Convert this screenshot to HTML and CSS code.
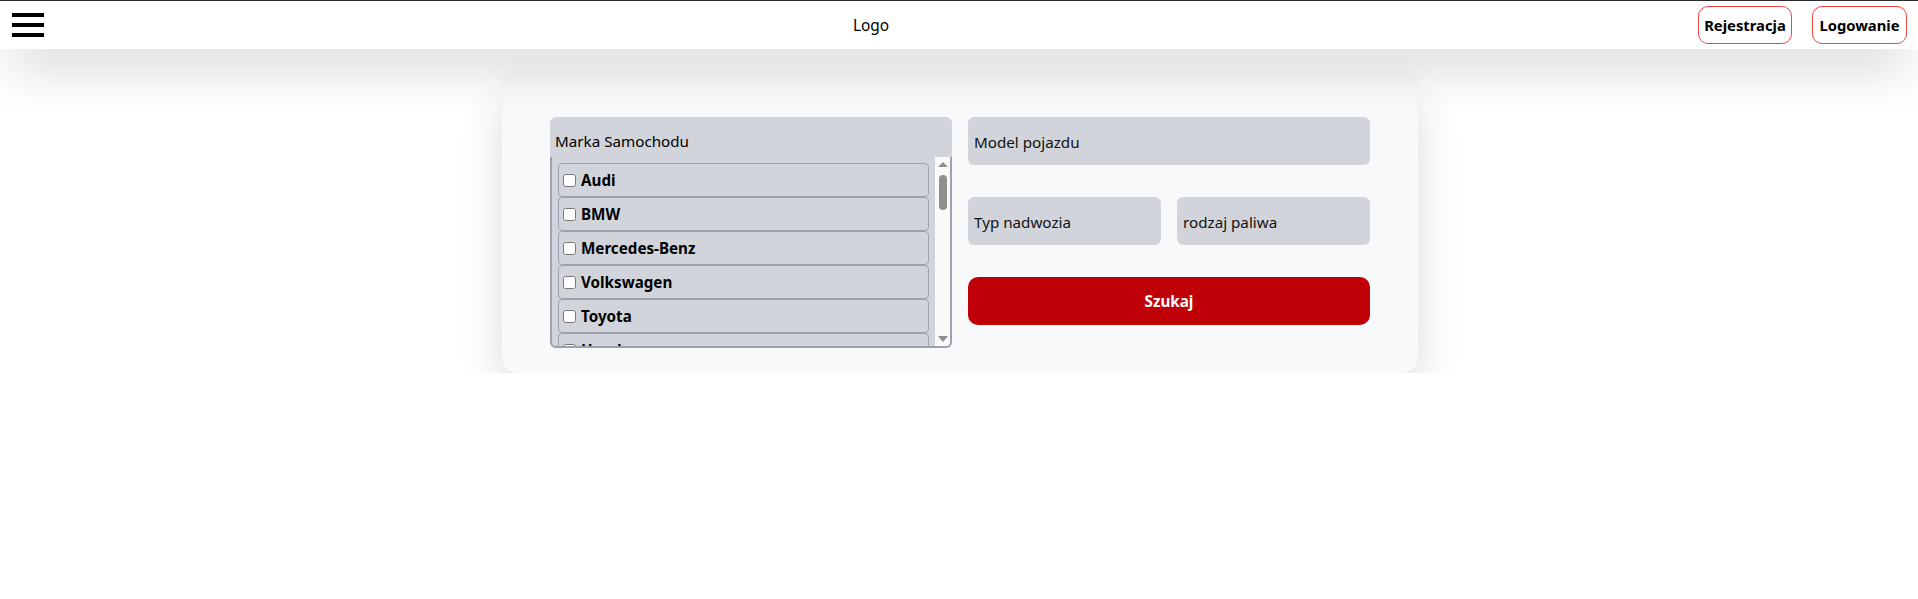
FILE: index.html
```html
<!DOCTYPE html>
<html lang="pl">
<head>
<meta charset="utf-8">
<title>Szukaj samochodu</title>
<link rel="stylesheet" href="styles.css">
</head>
<body>
<header class="topbar">
  <button class="burger" type="button" aria-label="Menu">
    <span class="burger-bar"></span>
    <span class="burger-bar"></span>
    <span class="burger-bar"></span>
  </button>
  <div class="logo">Logo</div>
  <div class="auth">
    <button class="auth-btn" type="button">Rejestracja</button>
    <button class="auth-btn" type="button">Logowanie</button>
  </div>
</header>
<main class="page">
  <form class="search-card">
    <div class="brand-box">
      <div class="brand-label">Marka Samochodu</div>
      <div class="brand-list">
        <div class="brand-items">
          <label class="brand-item"><input type="checkbox"><span>Audi</span></label>
          <label class="brand-item"><input type="checkbox"><span>BMW</span></label>
          <label class="brand-item"><input type="checkbox"><span>Mercedes-Benz</span></label>
          <label class="brand-item"><input type="checkbox"><span>Volkswagen</span></label>
          <label class="brand-item"><input type="checkbox"><span>Toyota</span></label>
          <label class="brand-item"><input type="checkbox"><span>Honda</span></label>
          <label class="brand-item"><input type="checkbox"><span>Ford</span></label>
        </div>
        <div class="scrollbar" aria-hidden="true">
          <span class="sb-btn"><span class="tri-up"></span></span>
          <span class="sb-thumb"></span>
          <span class="sb-track"></span>
          <span class="sb-btn"><span class="tri-down"></span></span>
        </div>
      </div>
    </div>
    <div class="right-col">
      <input class="field" type="text" placeholder="Model pojazdu">
      <div class="field-row">
        <input class="field" type="text" placeholder="Typ nadwozia">
        <input class="field" type="text" placeholder="rodzaj paliwa">
      </div>
      <button class="search-btn" type="button">Szukaj</button>
    </div>
  </form>
</main>
</body>
</html>
```

FILE: styles.css
```css
* {
  box-sizing: border-box;
}

html, body {
  margin: 0;
  padding: 0;
  background: #ffffff;
}

body {
  font-family: "Noto Sans", "Open Sans", Arial, sans-serif;
  font-size: 15.2px;
  line-height: 24px;
  color: #000;
}

.topbar {
  position: relative;
  z-index: 2;
  height: 49px;
  border-top: 1px solid #2b2b2b;
  background: #fff;
  display: flex;
  align-items: center;
  justify-content: space-between;
  padding: 0 11px 0 12px;
  box-shadow: 0 25px 50px -12px rgba(0, 0, 0, 0.25);
}

.burger {
  width: 32px;
  height: 24px;
  padding: 0;
  border: 0;
  background: transparent;
  display: flex;
  flex-direction: column;
  justify-content: space-between;
  cursor: pointer;
}

.burger-bar {
  display: block;
  width: 32px;
  height: 4px;
  background: #000;
}

.logo {
  font-size: 15.4px;
  padding-top: 1px;
  color: #000;
}

.auth {
  display: flex;
  gap: 20px;
}

.auth-btn {
  width: 94px;
  height: 38px;
  padding: 0;
  border: 1px solid #ef4444;
  border-radius: 10px;
  background: #fff;
  font-family: inherit;
  font-size: 14.8px;
  font-weight: 700;
  color: #000;
  cursor: pointer;
}

.auth-btn + .auth-btn {
  width: 95px;
}

.page {
  position: relative;
  z-index: 1;
  padding: 20px 0 0 2px;
}

.search-card {
  width: 916px;
  margin: 0 auto;
  background: #f8f9fb;
  border-radius: 16px;
  box-shadow: 0 25px 50px -12px rgba(0, 0, 0, 0.25);
  padding: 48px 48px 25px;
  display: grid;
  grid-template-columns: 1fr 1fr;
  column-gap: 16px;
  align-items: start;
}

.brand-box {
  height: 231px;
  background: #d1d5db;
  border-radius: 6px;
  display: flex;
  flex-direction: column;
}

.brand-label {
  height: 40px;
  padding: 12px 5px 4px;
  line-height: 24px;
}

.brand-list {
  flex: 1;
  min-height: 0;
  display: flex;
  border: 2px solid #9ca3af;
  border-top: 0;
  border-radius: 0 0 6px 6px;
  overflow: hidden;
}

.brand-items {
  flex: 1;
  min-width: 0;
  overflow: hidden;
  padding: 6px 6px 0;
}

.brand-item {
  display: flex;
  align-items: center;
  height: 34px;
  border: 1px solid #9ca3af;
  border-radius: 4px;
  background: #d1d5db;
  font-weight: 700;
  cursor: pointer;
}

.brand-item input {
  margin: 3px 5px 3px 4px;
  width: 13px;
  height: 13px;
}

.scrollbar {
  width: 15px;
  flex: none;
  background: #f9f9f9;
  display: flex;
  flex-direction: column;
  align-items: center;
}

.sb-btn {
  width: 15px;
  height: 15px;
  display: flex;
  align-items: center;
  justify-content: center;
  flex: none;
}

.tri-up {
  width: 0;
  height: 0;
  border-left: 5px solid transparent;
  border-right: 5px solid transparent;
  border-bottom: 5px solid #8d8d8d;
}

.tri-down {
  width: 0;
  height: 0;
  border-left: 5px solid transparent;
  border-right: 5px solid transparent;
  border-top: 6px solid #8d8d8d;
}

.sb-thumb {
  width: 8px;
  height: 35px;
  margin-top: 3px;
  border-radius: 4px;
  background: #8f8f8f;
  flex: none;
}

.sb-track {
  flex: 1;
}

.right-col {
  display: flex;
  flex-direction: column;
  gap: 32px;
}

.field-row {
  display: grid;
  grid-template-columns: 1fr 1fr;
  column-gap: 16px;
}

.field {
  height: 48px;
  width: 100%;
  border: 0;
  border-radius: 6px;
  background: #d1d5db;
  padding: 2px 6px 0;
  font-family: inherit;
  font-size: 15.2px;
  color: #000;
  outline: none;
}

.field::placeholder {
  color: #111;
  opacity: 1;
}

.search-btn {
  height: 48px;
  border: 0;
  border-radius: 10px;
  background: #c00008;
  color: #fff;
  font-family: inherit;
  font-size: 15.2px;
  font-weight: 700;
  cursor: pointer;
}
```
